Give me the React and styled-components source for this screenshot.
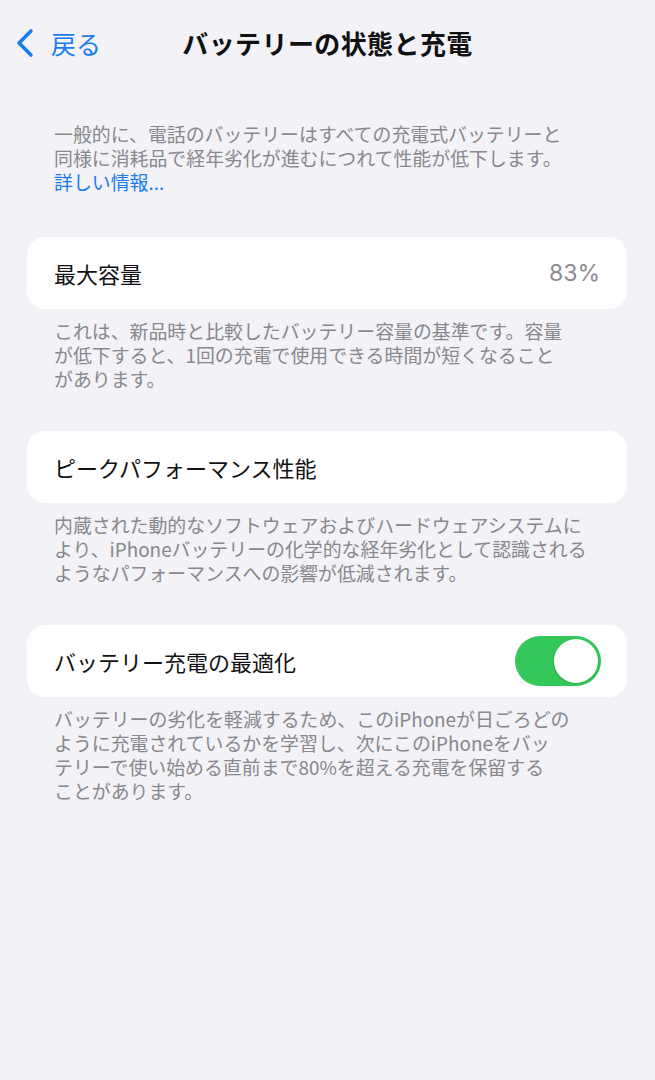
import React from "react";
import styled, { createGlobalStyle } from "styled-components";

const GlobalStyle = createGlobalStyle`
  html, body {
    margin: 0;
    padding: 0;
    background: #f2f2f7;
  }
  body {
    font-family: "Noto Sans CJK JP", "Noto Sans", sans-serif;
    -webkit-font-smoothing: antialiased;
  }
`;

const Page = styled.div`
  min-height: 1080px;
  background: #f2f2f7;
  display: flex;
  flex-direction: column;
`;

const NavBar = styled.header`
  height: 86px;
  display: grid;
  grid-template-columns: 1fr auto 1fr;
  align-items: center;
`;

const BackButton = styled.div`
  display: flex;
  align-items: center;
  gap: 15px;
  padding-left: 14px;
  color: #1b7cf0;
  font-size: 25px;
  line-height: 1;
`;

const Title = styled.h1`
  margin: 0;
  font-size: 26px;
  font-weight: 700;
  color: #111;
  letter-spacing: 0.4px;
  line-height: 1;
`;

const Content = styled.main`
  display: flex;
  flex-direction: column;
  padding-top: 36px;
`;

const Intro = styled.p`
  margin: 0 0 43px;
  padding: 0 54px;
  font-size: 18.9px;
  line-height: 24px;
  color: #88888d;
  white-space: nowrap;
`;

const Link = styled.span`
  color: #1b7cf0;
`;

const Section = styled.section`
  display: flex;
  flex-direction: column;
  margin-bottom: ${(p) => p.$after}px;
`;

const Card = styled.div`
  margin: 0 28px 0 27px;
  height: 72px;
  background: #ffffff;
  border-radius: 18px;
  display: flex;
  align-items: center;
  justify-content: space-between;
  padding: 0 27px;
  box-sizing: border-box;
`;

const Label = styled.span`
  font-size: 22px;
  color: #111;
  line-height: 1;
`;

const Value = styled.span`
  font-family: Inter, "Noto Sans", sans-serif;
  font-size: 23px;
  color: #8a8a8e;
  line-height: 1;
`;

const Footer = styled.p`
  margin: 10px 0 0;
  padding: 0 54px;
  font-size: 18.9px;
  line-height: 24px;
  color: #88888d;
  white-space: nowrap;
`;

const Track = styled.div`
  width: 86px;
  height: 50px;
  border-radius: 25px;
  background: ${(p) => (p.$on ? "#34c759" : "#e5e5ea")};
  display: flex;
  align-items: center;
  justify-content: ${(p) => (p.$on ? "flex-end" : "flex-start")};
  padding: 3px;
  box-sizing: border-box;
  margin-right: -1px;
`;

const Knob = styled.div`
  width: 44px;
  height: 44px;
  border-radius: 50%;
  background: #ffffff;
  box-shadow: 0 1px 3px rgba(0, 0, 0, 0.12);
`;

const Chevron = () => (
  <svg width="22" height="30" viewBox="0 0 22 30" fill="none">
    <path
      d="M17 3 L5 15 L17 27"
      stroke="#1b7cf0"
      strokeWidth="3.6"
      strokeLinecap="round"
      strokeLinejoin="round"
    />
  </svg>
);

const Toggle = ({ on }) => (
  <Track $on={on}>
    <Knob />
  </Track>
);

export default function App() {
  return (
    <>
      <GlobalStyle />
      <Page>
        <NavBar>
          <BackButton>
            <Chevron />
            <span>戻る</span>
          </BackButton>
          <Title>バッテリーの状態と充電</Title>
          <div />
        </NavBar>
        <Content>
          <Intro>
            一般的に、電話のバッテリーはすべての充電式バッテリーと
            <br />
            同様に消耗品で経年劣化が進むにつれて性能が低下します。
            <br />
            <Link>詳しい情報...</Link>
          </Intro>

          <Section $after={40}>
            <Card>
              <Label>最大容量</Label>
              <Value>83%</Value>
            </Card>
            <Footer>
              これは、新品時と比較したバッテリー容量の基準です。容量
              <br />
              が低下すると、1回の充電で使用できる時間が短くなること
              <br />
              があります。
            </Footer>
          </Section>

          <Section $after={40}>
            <Card>
              <Label>ピークパフォーマンス性能</Label>
            </Card>
            <Footer>
              内蔵された動的なソフトウェアおよびハードウェアシステムに
              <br />
              より、iPhoneバッテリーの化学的な経年劣化として認識される
              <br />
              ようなパフォーマンスへの影響が低減されます。
            </Footer>
          </Section>

          <Section $after={0}>
            <Card>
              <Label>バッテリー充電の最適化</Label>
              <Toggle on />
            </Card>
            <Footer>
              バッテリーの劣化を軽減するため、このiPhoneが日ごろどの
              <br />
              ように充電されているかを学習し、次にこのiPhoneをバッ
              <br />
              テリーで使い始める直前まで80%を超える充電を保留する
              <br />
              ことがあります。
            </Footer>
          </Section>
        </Content>
      </Page>
    </>
  );
}
